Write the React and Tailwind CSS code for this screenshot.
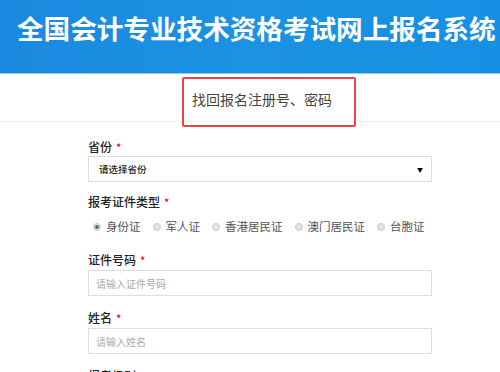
import React from "react";

const font = { fontFamily: '"Noto Sans CJK SC", "Noto Sans", sans-serif' };

const Star = () => <span className="ml-[4px] text-[#e60012] text-[11px]">*</span>;

const Label = ({ children, className = "" }) => (
  <div className={`h-[16px] leading-[16px] text-[12px] text-[#222] font-medium ${className}`}>
    {children}
    <Star />
  </div>
);

const Radio = ({ text, checked }) => (
  <label className="flex items-center mr-[12px] whitespace-nowrap shrink-0">
    <span className="w-[8px] h-[8px] rounded-full border border-[#c8c8c8] bg-[#e4e4e4] flex items-center justify-center">
      {checked && <span className="w-[4px] h-[4px] rounded-full bg-[#666]" />}
    </span>
    <span className="ml-[5px] text-[11.5px] text-[#555]">{text}</span>
  </label>
);

const App = () => {
  const types = ["身份证", "军人证", "香港居民证", "澳门居民证", "台胞证"];

  return (
    <div className="w-[500px] h-[372px] overflow-hidden bg-white" style={font}>
      {/* header */}
      <header className="h-[74px] bg-gradient-to-r from-[#1a89df] via-[#1b92e4] to-[#1590e2] border-b border-[#8ccbf2]">
        <h1 className="pl-[17px] pt-[14px] text-[26.6px] leading-[28px] font-bold text-white whitespace-nowrap">
          全国会计专业技术资格考试网上报名系统
        </h1>
      </header>

      {/* tab bar */}
      <div className="relative h-[48px] border-b border-[#ececec]">
        <div className="pl-[192px] pt-[15px] text-[14px] leading-[20px] text-[#444]">找回报名注册号、密码</div>
        <div className="absolute left-[182px] top-[3px] w-[174px] h-[50px] border-2 border-[#e8454a] rounded-[2px]" />
      </div>

      {/* form */}
      <form className="pl-[88px] pr-[68px] pt-[17px]">
        <Label>省份</Label>
        <div className="mt-[1px] h-[26px] border border-[#ddd] flex items-center justify-between pl-[10px] pr-[8px]">
          <span className="text-[9.5px] text-[#222] font-medium">请选择省份</span>
          <span className="text-[6px] text-black">▼</span>
        </div>

        <Label className="mt-[12px]">报考证件类型</Label>
        <div className="mt-[7px] h-[20px] flex items-center pl-[5px] whitespace-nowrap">
          {types.map((t, i) => (
            <Radio key={t} text={t} checked={i === 0} />
          ))}
        </div>

        <Label className="mt-[15px]">证件号码</Label>
        <div className="mt-[2px] h-[26px] border border-[#ddd] flex items-center pl-[7px] text-[10px] text-[#aaa]">
          请输入证件号码
        </div>

        <Label className="mt-[14px]">姓名</Label>
        <div className="mt-[2px] h-[26px] border border-[#ddd] flex items-center pl-[7px] text-[10px] text-[#aaa]">
          请输入姓名
        </div>

        <Label className="mt-[14px]">报考级别</Label>
      </form>
    </div>
  );
};

export default App;
